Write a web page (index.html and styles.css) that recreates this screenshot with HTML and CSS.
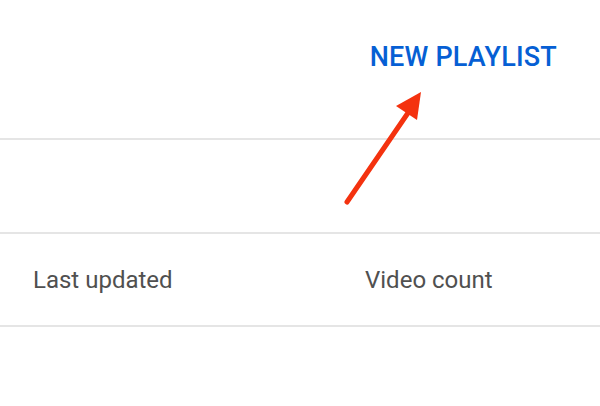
FILE: index.html
```html
<!DOCTYPE html>
<html lang="en">
<head>
    <meta charset="UTF-8">
    <meta name="viewport" content="width=device-width, initial-scale=1.0">
    <title>Playlists</title>
    <link rel="stylesheet" href="styles.css">
</head>
<body>
    <div class="page">
        <header class="toolbar">
            <button class="new-playlist">NEW PLAYLIST</button>
        </header>

        <section class="filter-row"></section>

        <div class="table-head">
            <div class="col col-updated">Last updated</div>
            <div class="col col-count">Video count</div>
        </div>

        <!-- стрелка поверх страницы -->
        <svg class="arrow" width="600" height="406" viewBox="0 0 600 406">
            <line x1="347" y1="202" x2="410" y2="110" stroke="#f4320f" stroke-width="5" stroke-linecap="round"/>
            <polygon points="421,92 396,106 417,120" fill="#f4320f"/>
        </svg>
    </div>
</body>
</html>
```

FILE: styles.css
```css
body {
    margin: 0;
    padding: 0;
    background-color: #fff;
    font-family: Roboto, "Liberation Sans", Arial, sans-serif;
}

.page {
    position: relative;
    width: 600px;
    height: 406px;
    overflow: hidden;
}

.toolbar {
    height: 140px;
    display: flex;
    justify-content: flex-end;
    align-items: flex-start;
    padding-right: 43px;
    box-sizing: border-box;
    border-bottom: 2px solid #e5e5e5;
}

.new-playlist {
    margin-top: 41px;
    padding: 0;
    border: none;
    background: none;
    color: #065fd4;
    font-family: inherit;
    font-size: 27px;
    font-weight: 500;
    letter-spacing: 0.2px;
    cursor: pointer;
}

.filter-row {
    height: 92px;
    border-bottom: 2px solid #e5e5e5;
}

.table-head {
    height: 91px;
    display: flex;
    align-items: center;
    border-bottom: 2px solid #e5e5e5;
    color: #505050;
    font-size: 24px;
}

.col-updated {
    padding-left: 33px;
    width: 332px;
}

.arrow {
    position: absolute;
    top: 0;
    left: 0;
    pointer-events: none;
}
```
